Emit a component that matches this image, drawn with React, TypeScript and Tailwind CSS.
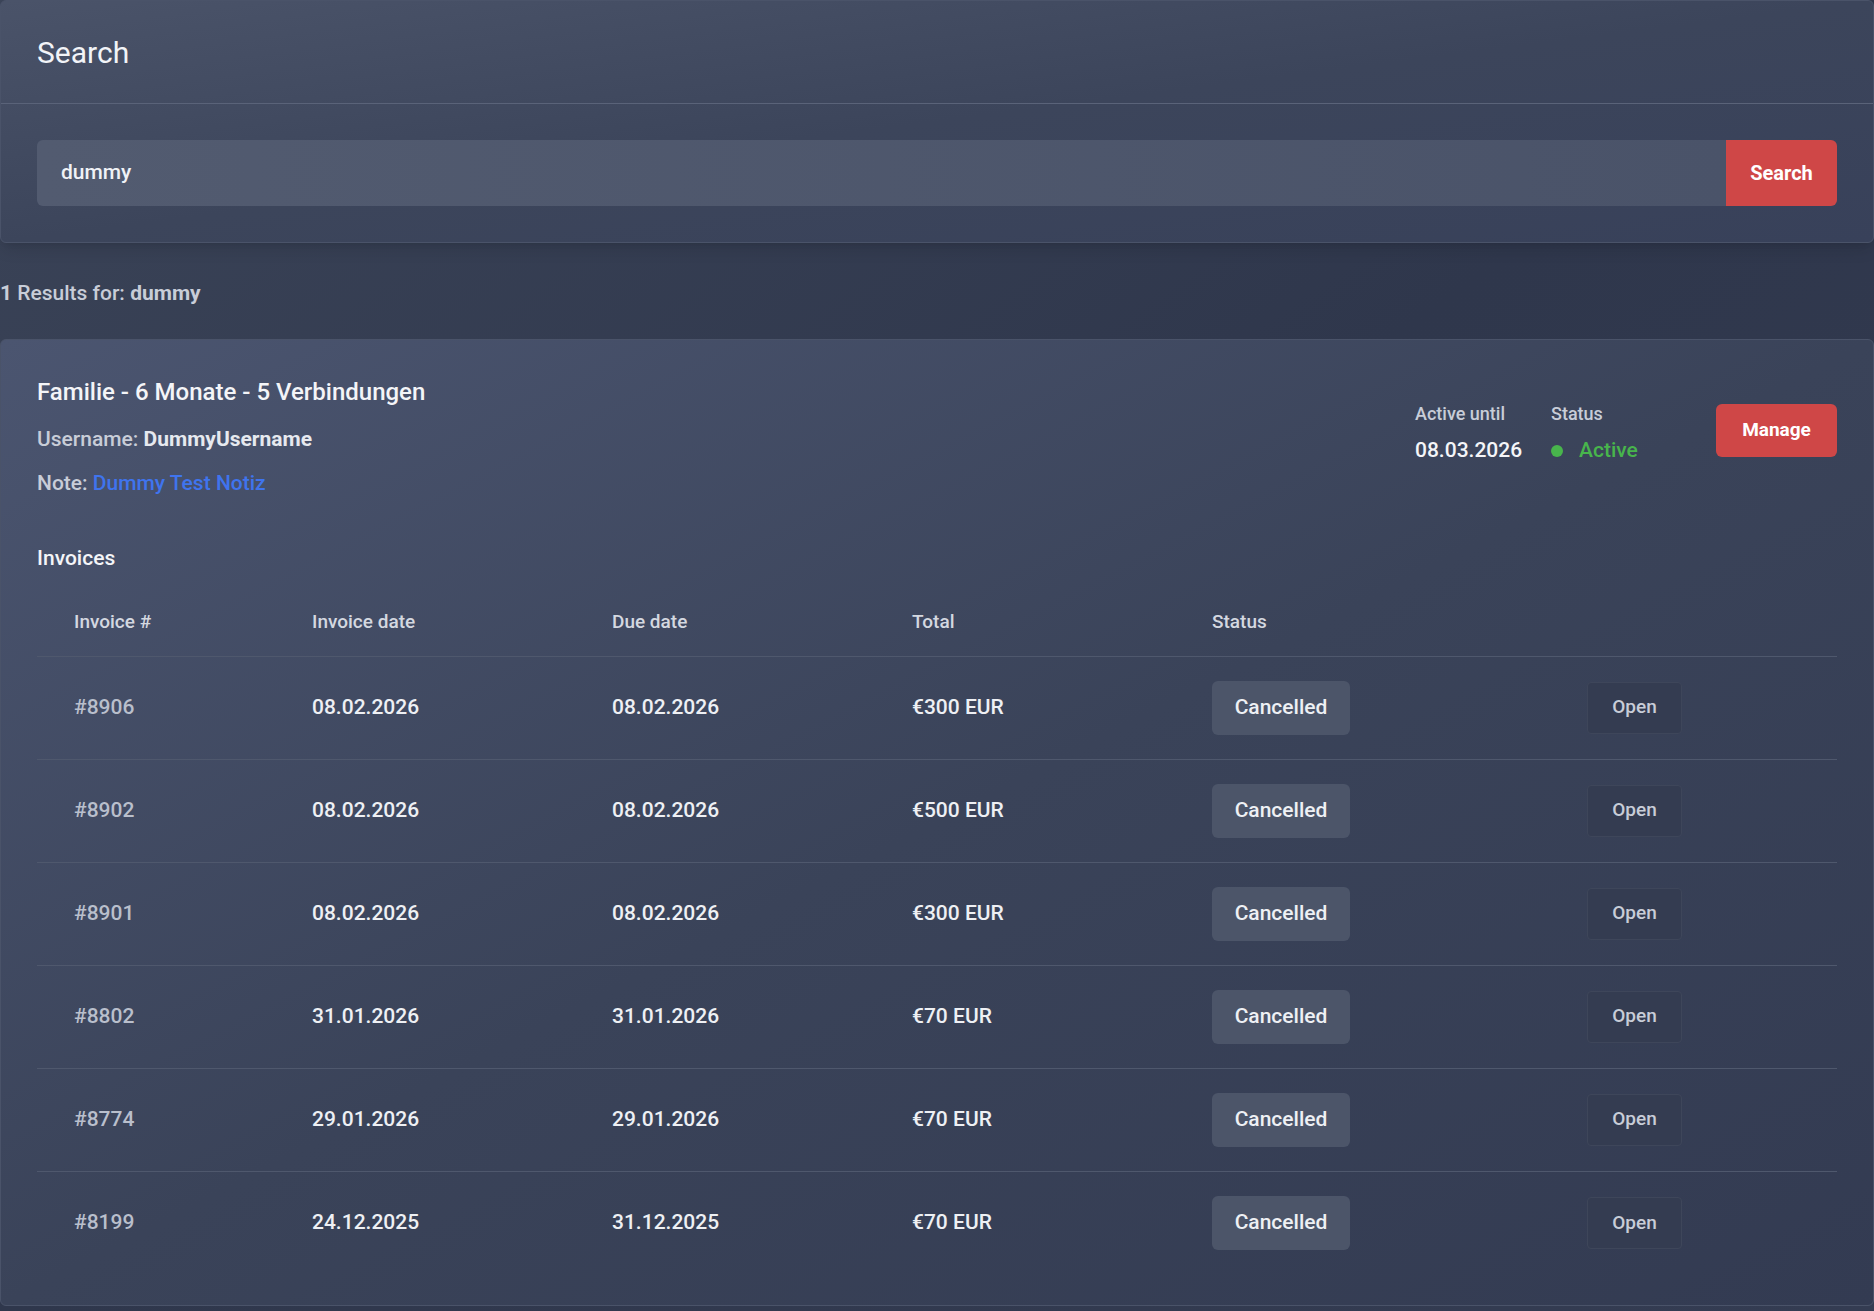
export default function App() {
  const rows = [
    ["#8906", "08.02.2026", "08.02.2026", "€300 EUR"],
    ["#8902", "08.02.2026", "08.02.2026", "€500 EUR"],
    ["#8901", "08.02.2026", "08.02.2026", "€300 EUR"],
    ["#8802", "31.01.2026", "31.01.2026", "€70 EUR"],
    ["#8774", "29.01.2026", "29.01.2026", "€70 EUR"],
    ["#8199", "24.12.2025", "31.12.2025", "€70 EUR"],
  ];
  return (
    <div className="min-h-[1311px] w-[1874px] bg-gradient-to-br from-[#3b4458] via-[#2f374c] to-[#343c52] text-white" style={{ fontFamily: "Roboto, 'Liberation Sans', sans-serif" }}>
      <div className="rounded-md border border-[#4a5369] bg-gradient-to-br from-[#4a5369] via-[#3c455b] to-[#38415a] shadow-lg">
        <div className="flex h-[103px] items-center border-b border-[#5a6379] px-9">
          <h1 className="text-[30px] text-[#f2f4f8]">Search</h1>
        </div>
        <div className="flex px-9 pt-[36px] pb-[36px]">
          <div className="flex h-[66px] flex-1 items-center rounded-l-md bg-gradient-to-r from-[#525b70] to-[#4a5369] px-6 text-[21px] font-medium text-[#f0f2f6]">dummy</div>
          <button className="h-[66px] w-[111px] rounded-r-md bg-[#cf4747] text-[20px] font-bold text-white">Search</button>
        </div>
      </div>
      <div className="flex h-[96px] items-center pt-[6px] text-[21px] font-medium text-[#c8cdd8]">
        <span className="font-bold">1</span>&nbsp;Results for:&nbsp;<span className="font-bold">dummy</span>
      </div>
      <div className="rounded-md border border-[#4a5369] bg-gradient-to-br from-[#4b5570] via-[#3a4359] to-[#333b52] px-9 pt-[34px] pb-[30px]">
        <div className="flex items-start">
          <div className="flex-1">
            <div className="text-[24px] font-medium text-[#f4f5f8]">Familie - 6 Monate - 5 Verbindungen</div>
            <div className="mt-[14px] text-[21px] font-medium text-[#c8cdd8]">Username: <span className="font-bold text-[#e6e9ef]">DummyUsername</span></div>
            <div className="mt-[12px] text-[21px] font-medium text-[#c8cdd8]">Note: <span className="text-[#3f74ee]">Dummy Test Notiz</span></div>
          </div>
          <div className="mt-[26px] flex">
            <div className="w-[136px]">
              <div className="text-[18px] font-medium text-[#c8cdd8]">Active until</div>
              <div className="mt-[8px] text-[21px] font-medium text-[#f4f5f8]">08.03.2026</div>
            </div>
            <div className="w-[165px]">
              <div className="text-[18px] font-medium text-[#c8cdd8]">Status</div>
              <div className="mt-[8px] flex items-center gap-[16px] text-[21px] font-medium text-[#48b54c]">
                <span className="h-[12px] w-[12px] rounded-full bg-[#48b54c]"></span>Active
              </div>
            </div>
            <button className="mt-[4px] h-[53px] w-[121px] rounded-md bg-[#cf4747] text-[19px] font-bold text-white">Manage</button>
          </div>
        </div>
        <div className="mt-[44px] text-[21px] font-medium text-[#f4f5f8]">Invoices</div>
        <div className="mt-[14px]">
          <div className="flex h-[68px] items-center border-b border-[#4f586d] pl-[37px] text-[19px] font-medium text-[#d4d8e0]">
            <div className="w-[238px]">Invoice #</div>
            <div className="w-[300px]">Invoice date</div>
            <div className="w-[300px]">Due date</div>
            <div className="w-[300px]">Total</div>
            <div>Status</div>
          </div>
          {rows.map((r, i) => (
            <div key={r[0]} className={`flex h-[103px] items-center pl-[37px] text-[21px] font-medium ${i < rows.length - 1 ? "border-b border-[#4f586d]" : ""}`}>
              <div className="w-[238px] text-[#b9bfcc]">{r[0]}</div>
              <div className="w-[300px] text-[#eef0f4]">{r[1]}</div>
              <div className="w-[300px] text-[#eef0f4]">{r[2]}</div>
              <div className="w-[300px] text-[#eef0f4]">{r[3]}</div>
              <div className="w-[375px]">
                <span className="inline-flex h-[54px] w-[138px] items-center justify-center rounded-md bg-[#4c5569] text-[21px] font-medium text-[#eef0f4]">Cancelled</span>
              </div>
              <span className="inline-flex h-[52px] w-[95px] items-center justify-center rounded-sm border border-[#3e465a] bg-[#343c51] text-[19px] font-medium text-[#c8cdd8]">Open</span>
            </div>
          ))}
        </div>
      </div>
    </div>
  );
}
